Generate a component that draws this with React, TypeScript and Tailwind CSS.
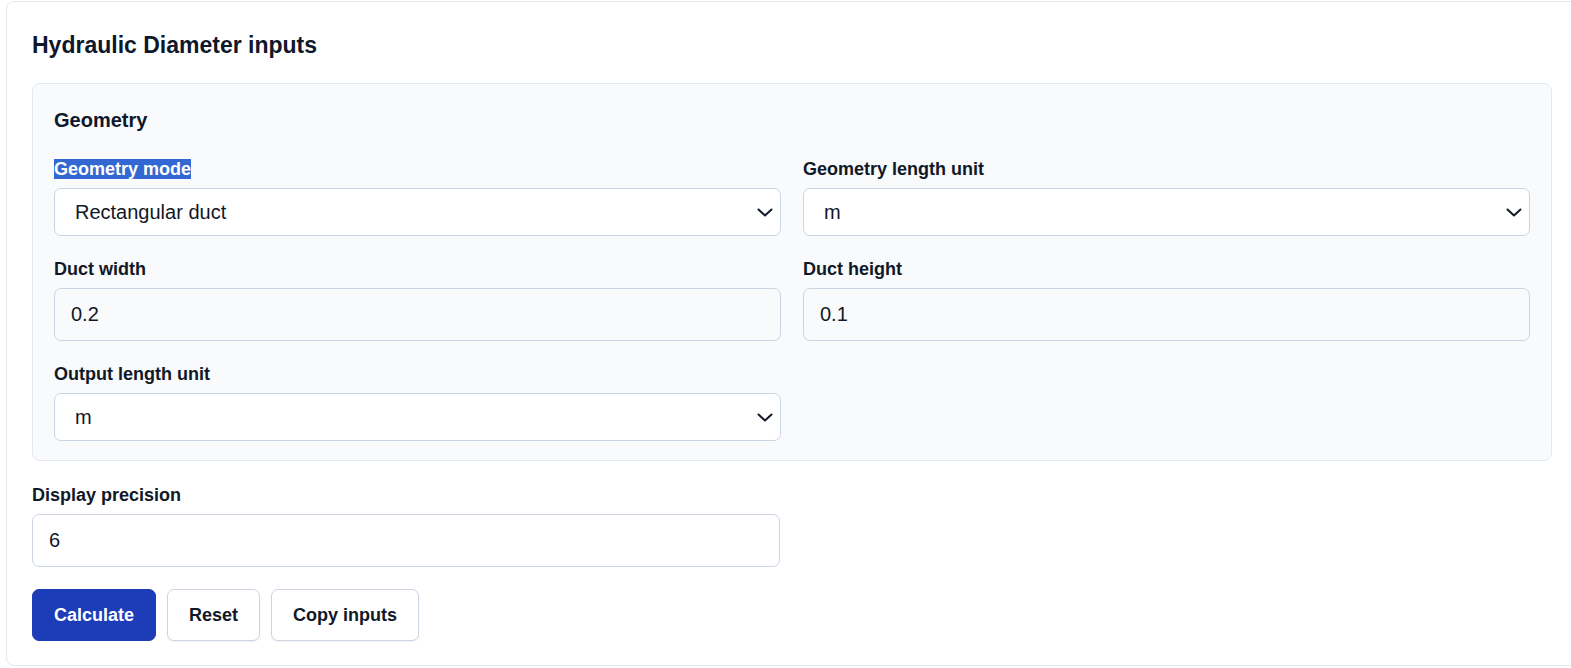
import React from 'react'

const font = "font-['Liberation_Sans',Arial,sans-serif]"

function Chevron() {
  return (
    <svg width="16" height="9" viewBox="0 0 16 9" fill="none" stroke="#111827" strokeWidth="2" strokeLinecap="round" strokeLinejoin="round">
      <path d="M1.5 1.5 8 7.5l6.5-6" />
    </svg>
  )
}

function Label({ children, selected = false }: { children: React.ReactNode; selected?: boolean }) {
  return (
    <div className="text-[18px] leading-[25px] font-bold text-[#111827] mb-[6px]">
      {selected ? <span className="bg-[#3367d1] text-white">{children}</span> : children}
    </div>
  )
}

function SelectField({ label, value, selected }: { label: string; value: string; selected?: boolean }) {
  return (
    <div>
      <Label selected={selected}>{label}</Label>
      <div className="h-[48px] flex items-center justify-between rounded-[7px] border border-[#cbd5e1] bg-white pl-[20px] pr-[7px]">
        <span className="text-[20px] text-[#111827]">{value}</span>
        <Chevron />
      </div>
    </div>
  )
}

function InputField({ label, value }: { label: string; value: string }) {
  return (
    <div>
      <Label>{label}</Label>
      <input
        readOnly
        value={value}
        className={`${font} w-full h-[53px] rounded-[7px] border border-[#cbd5e1] bg-transparent px-[16px] text-[20px] text-[#111827] outline-none`}
      />
    </div>
  )
}

export default function App() {
  return (
    <div className={`${font} w-full h-[668px] overflow-hidden bg-white`}>
      <div className="mt-px ml-[6px] w-[1572px] rounded-[8px] border border-[#e2e8f0] bg-white px-[25px] pt-[29px] pb-[24px]">
        <h2 className="text-[23px] leading-[28px] font-bold text-[#0f172a] mb-[24px]">Hydraulic Diameter inputs</h2>

        <div className="rounded-[8px] border border-[#e2e8f0] bg-[#f8fafc] px-[21px] pt-[24px] pb-[19px]">
          <h3 className="text-[20px] leading-[24px] font-bold text-[#0f172a]">Geometry</h3>
          <div className="mt-[25px] grid grid-cols-2 gap-x-[22px] gap-y-[21px]">
            <SelectField label="Geometry mode" value="Rectangular duct" selected />
            <SelectField label="Geometry length unit" value="m" />
            <InputField label="Duct width" value="0.2" />
            <InputField label="Duct height" value="0.1" />
            <SelectField label="Output length unit" value="m" />
          </div>
        </div>

        <div className="mt-[22px] w-[748px]">
          <Label>Display precision</Label>
          <input
            readOnly
            value="6"
            className={`${font} w-full h-[53px] rounded-[7px] border border-[#cbd5e1] bg-white px-[16px] text-[20px] text-[#111827] outline-none`}
          />
        </div>

        <div className="mt-[22px] flex gap-[11px]">
          <button className="h-[52px] rounded-[7px] border border-[#1d3db8] bg-[#1d3db8] px-[21px] text-[18px] font-bold text-white">
            Calculate
          </button>
          <button className="h-[52px] rounded-[7px] border border-[#cbd5e1] bg-white px-[21px] text-[18px] font-bold text-[#111827] shadow-[0_1px_2px_rgba(15,23,42,0.06)]">
            Reset
          </button>
          <button className="h-[52px] rounded-[7px] border border-[#cbd5e1] bg-white px-[21px] text-[18px] font-bold text-[#111827] shadow-[0_1px_2px_rgba(15,23,42,0.06)]">
            Copy inputs
          </button>
        </div>
      </div>
    </div>
  )
}
